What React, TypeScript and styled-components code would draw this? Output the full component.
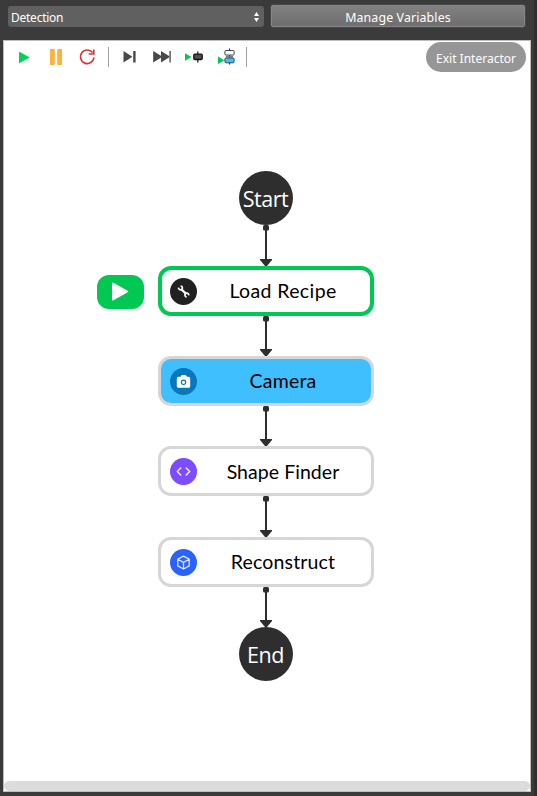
import React from "react";
import styled, { createGlobalStyle } from "styled-components";

const GlobalStyle = createGlobalStyle`
  * { box-sizing: border-box; }
  html, body { margin: 0; background: #3b3b3b; }
`;

const Window = styled.main`
  display: flex;
  flex-direction: column;
  width: 537px;
  height: 796px;
  overflow: hidden;
  padding: 5px 6px 4px 3px;
  background: linear-gradient(to right, #3b3b3b 534px, #302f2e 534px);
  font-family: "Noto Sans", "Open Sans", sans-serif;
`;

const TopBar = styled.header`
  display: flex;
  align-items: flex-start;
  gap: 6px;
  height: 35px;
  padding-left: 5px;
`;

const Select = styled.button`
  display: flex;
  align-items: center;
  justify-content: space-between;
  width: 256px;
  height: 21px;
  margin: 1px 0 0;
  padding: 0 5px 0 3px;
  border: 0;
  border-radius: 3px;
  background: #606060;
  color: #fff;
  font: 12px/20px "Noto Sans", sans-serif;
  letter-spacing: -0.25px;
  span { padding-top: 2px; }
`;

const VariablesButton = styled.button`
  width: 256px;
  height: 24px;
  margin: -1px 0 0;
  padding: 3px 0 0;
  border: 1px solid #484848;
  border-radius: 3px;
  background: linear-gradient(#828282, #6d6d6d);
  box-shadow: inset 0 0 0 1px #858585;
  color: #fff;
  font: 12.4px/20px "Noto Sans", sans-serif;
  letter-spacing: 0.12px;
`;

const Canvas = styled.section`
  display: flex;
  flex-direction: column;
  height: 752px;
  border: 1px solid #bdbdbd;
  background: #fff;
`;

const Toolbar = styled.nav`
  display: flex;
  justify-content: space-between;
  height: 34px;
  padding-right: 4px;
`;

const ExitButton = styled.button`
  width: 100px;
  height: 30px;
  margin: 1px 0 0;
  padding: 3px 0 0;
  border: 0;
  border-radius: 15px;
  background: #969696;
  color: #fff;
  font: 12px/20px "Noto Sans", sans-serif;
`;

const Tools = styled.div`
  display: flex;
  padding-top: 6px;
`;

const Tool = styled.span<{ $w: number }>`
  width: ${(p) => p.$w}px;
  height: 22px;
  svg { display: block; }
`;

const Divider = styled.i`
  width: 1px;
  height: 20px;
  background: #a2a2a2;
`;

const Flow = styled.div`
  display: flex;
  flex: 1;
  flex-direction: column;
  align-items: center;
  padding: 96px 3px 0 0;
`;

const Terminal = styled.div`
  display: flex;
  align-items: center;
  justify-content: center;
  flex: none;
  width: 54px;
  height: 54px;
  padding-top: 1px;
  border-radius: 50%;
  background: #2e2e2e;
  color: #fff;
  font: 400 21.5px/28px "Open Sans", sans-serif;
  letter-spacing: -0.5px;
`;

const Step = styled.div`
  position: relative;
  flex: none;
`;

const Card = styled.div<{ $running?: boolean; $fill?: string }>`
  display: flex;
  align-items: center;
  width: 216px;
  height: 50px;
  padding: 0 ${(p) => (p.$running ? 0 : 1)}px 0 ${(p) => (p.$running ? 8 : 9)}px;
  border: ${(p) => (p.$running ? "4px solid #00c853" : "3px solid #d6d6d6")};
  border-radius: 13px;
  background: ${(p) => p.$fill ?? "#fff"};
`;

const Disc = styled.span<{ $color: string }>`
  display: flex;
  flex: none;
  width: 27px;
  height: 27px;
  border-radius: 50%;
  background: ${(p) => p.$color};
`;

const Label = styled.span<{ $spacing: number; $drop?: number }>`
  flex: 1;
  padding-top: ${(p) => p.$drop ?? 0}px;
  padding-bottom: ${(p) => (p.$drop ? 0 : 1)}px;
  text-align: center;
  white-space: nowrap;
  color: #000;
  font: 19.5px/26px Lato, sans-serif;
  letter-spacing: ${(p) => p.$spacing}px;
`;

const RunBadge = styled.span`
  position: absolute;
  left: -61px;
  top: 9px;
  width: 47px;
  height: 34px;
  border-radius: 12px;
  background: #00c853;
  svg { display: block; }
`;

const ConnectorBox = styled.div<{ $h: number }>`
  flex: none;
  width: 12px;
  height: ${(p) => p.$h}px;
  svg { display: block; }
`;

const ScrollBar = styled.div`
  flex: none;
  height: 10px;
  border-radius: 5px;
  background: #dcdcdc;
`;

const Connector = ({ h }: { h: number }) => (
  <ConnectorBox $h={h}>
    <svg width="12" height={h} fill="#2e2e2e">
      <rect x="3" y="0" width="6" height="5.5" rx="1.5" />
      <rect x="5" y="3" width="2" height={h - 6} />
      <path d={`M0 ${h - 7}H12V${h - 6}L7 ${h}H5L0 ${h - 6}Z`} />
    </svg>
  </ConnectorBox>
);

const Wrench = () => (
  <svg width="27" height="27" fill="none" stroke="#fff">
    <path d="M11 11 16.2 15.8" strokeWidth="2.3" />
    <path d="M8.6 9.6A1.9 1.9 0 1 0 10.6 8M18.7 17.4A1.9 1.9 0 1 0 16.6 18.9" strokeWidth="1.7" />
  </svg>
);

const CameraIcon = () => (
  <svg width="27" height="27">
    <path fill="#fff" d="M8.5 8.8H10.5L11.7 7.1H15.8L17 8.8H18.7Q20.2 8.8 20.2 10.3V18.3Q20.2 19.8 18.7 19.8H8.3Q6.8 19.8 6.8 18.3V10.3Q6.8 8.8 8.5 8.8Z" />
    <circle cx="13.5" cy="14.3" r="2.2" fill="none" stroke="#0878bd" strokeWidth="1.1" />
  </svg>
);

const CodeIcon = () => (
  <svg width="27" height="27" fill="none" stroke="#efe9ff" strokeWidth="1.4">
    <path d="M11.2 9.5 7.3 13.5 11.2 17.5M15.8 9.5 19.7 13.5 15.8 17.5" />
  </svg>
);

const CubeIcon = () => (
  <svg width="27" height="27" fill="none" stroke="#dce7ff" strokeWidth="1.3" strokeLinejoin="round">
    <path d="M13.5 7.2 19.2 10.2V16.9L13.5 20 7.8 16.9V10.2ZM7.8 10.2 13.5 13.4 19.2 10.2M13.5 13.4V20" />
  </svg>
);

const steps = [
  { name: "Load Recipe", color: "#212121", icon: <Wrench />, running: true, after: 40, spacing: 0.38 },
  { name: "Camera", color: "#0878bd", icon: <CameraIcon />, fill: "#40bfff", after: 40, spacing: 0.2 },
  { name: "Shape Finder", color: "#7c4dff", icon: <CodeIcon />, after: 41, spacing: 0.05, drop: 1 },
  { name: "Reconstruct", color: "#2962ff", icon: <CubeIcon />, after: 40, spacing: 0.15 },
];

export default function App() {
  return (
    <>
      <GlobalStyle />
      <Window>
        <TopBar>
          <Select>
            <span>Detection</span>
            <svg width="5" height="10" fill="#fff"><path d="M0 4 2.5 0 5 4ZM0 6H5L2.5 10Z" /></svg>
          </Select>
          <VariablesButton>Manage Variables</VariablesButton>
        </TopBar>
        <Canvas>
          <Toolbar>
            <Tools>
              <Tool $w={104}>
                <svg width="104" height="22">
                  <path d="M15 4.5 25.8 10.5 15 16.3Z" fill="#00d45a" />
                  <rect x="46" y="2" width="4.8" height="16" rx="1" fill="#ffb13d" />
                  <rect x="53.2" y="2" width="4.8" height="16" rx="1" fill="#ffb13d" />
                  <path d="M88.6 5.6A6.8 6.8 0 1 0 90 10.5" fill="none" stroke="#dc3338" strokeWidth="1.7" />
                  <path d="M89.8 2.4V7H84.7" fill="none" stroke="#dc3338" strokeWidth="1.7" />
                </svg>
              </Tool>
              <Divider />
              <Tool $w={137}>
                <svg width="137" height="22">
                  <g fill="#484848">
                    <path d="M14.5 4 23.4 9.8 14.5 15.6Z" />
                    <rect x="24.2" y="4" width="2.4" height="11.5" />
                    <path d="M44.2 4 53.5 9.8 44.2 15.6ZM52 4 61.2 9.8 52 15.6Z" />
                    <rect x="60.2" y="4" width="1.8" height="11.5" fill="#777" />
                  </g>
                  <path d="M76 6.3 82.6 10 76 13.7Z" fill="#00ca56" />
                  <path d="M88.8 4.5V15.5" stroke="#222" strokeWidth="1.3" />
                  <rect x="84.8" y="7.1" width="8.4" height="5.4" rx="1" fill="#505050" stroke="#111" strokeWidth="1.3" />
                  <path d="M109 9.5 115.4 13.2 109 17Z" fill="#00ca56" />
                  <path d="M120.5 1.5V17.5" stroke="#333" strokeWidth="1.2" />
                  <rect x="115.9" y="3.5" width="9.2" height="4.5" rx="1" fill="#fff" stroke="#444" />
                  <path d="M117 9.6H124" stroke="#777" strokeWidth="1.8" />
                  <rect x="115.9" y="11" width="9.2" height="4.8" rx="1" fill="#40bfff" stroke="#344d5a" />
                </svg>
              </Tool>
              <Divider />
            </Tools>
            <ExitButton>Exit Interactor</ExitButton>
          </Toolbar>
          <Flow>
            <Terminal>Start</Terminal>
            <Connector h={41} />
            {steps.map((s) => (
              <React.Fragment key={s.name}>
                <Step>
                  {s.running && (
                    <RunBadge>
                      <svg width="47" height="34">
                        <path d="M16 8.5 30.2 16.5 16 24.5Z" fill="#fff" stroke="#fff" strokeWidth="2" strokeLinejoin="round" />
                      </svg>
                    </RunBadge>
                  )}
                  <Card $running={s.running} $fill={s.fill}>
                    <Disc $color={s.color}>{s.icon}</Disc>
                    <Label $spacing={s.spacing} $drop={s.drop}>{s.name}</Label>
                  </Card>
                </Step>
                <Connector h={s.after} />
              </React.Fragment>
            ))}
            <Terminal>End</Terminal>
          </Flow>
          <ScrollBar />
        </Canvas>
      </Window>
    </>
  );
}
